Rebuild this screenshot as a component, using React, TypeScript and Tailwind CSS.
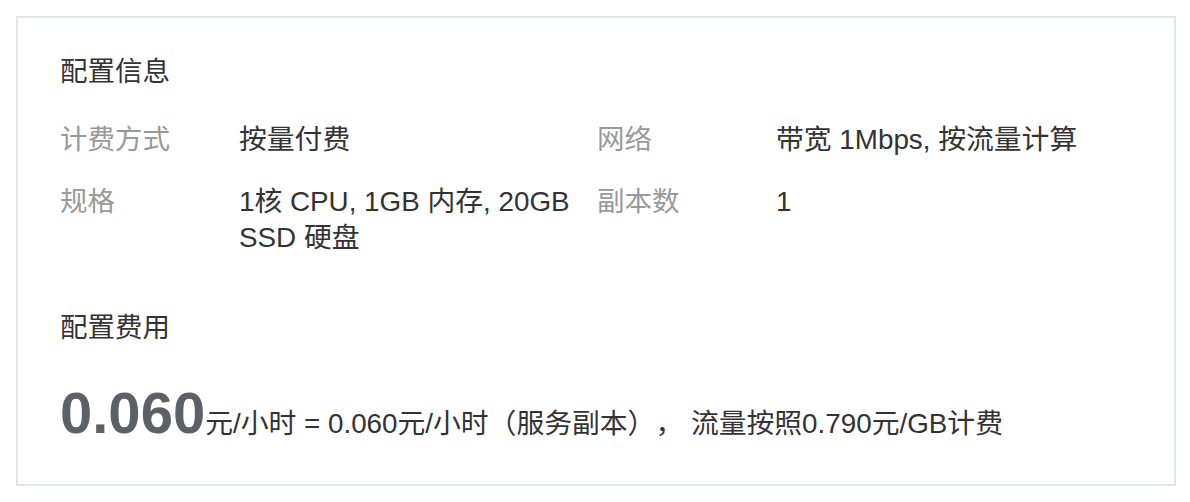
export default function App() {
  const font = { fontFamily: '"Liberation Sans", "Noto Sans CJK SC", sans-serif' };
  return (
    <div className="w-[1190px] h-[502px] bg-white p-4 [text-spacing-trim:space-all]" style={font}>
      <div className="h-[470px] w-[1160px] border-2 border-[#e1e6eb] px-[42px] pt-[36px] text-[#333333]">
        <h2 className="text-[27.5px] leading-[36px]">配置信息</h2>

        <div className="mt-8 grid grid-cols-[179px_358px_179px_358px] gap-y-[26px] text-[27.5px] leading-[36px]">
          <div className="text-[#999999]">计费方式</div>
          <div className="text-[27.8px]">按量付费</div>
          <div className="text-[#999999]">网络</div>
          <div className="text-[27.8px]">带宽 1Mbps, 按流量计算</div>

          <div className="text-[#999999]">规格</div>
          <div className="text-[27.8px]">1核 CPU, 1GB 内存, 20GB SSD 硬盘</div>
          <div className="text-[#999999]">副本数</div>
          <div className="text-[27.8px]">1</div>
        </div>

        <h2 className="mt-[54px] text-[27.5px] leading-[36px]">配置费用</h2>

        <div className="mt-[38px] flex items-baseline whitespace-nowrap">
          <span className="text-[58px] leading-none font-bold text-[#5a6168]">0.060</span>
          <span className="text-[27.8px]">元/小时 = 0.060元/小时（服务副本）， 流量按照0.790元/GB计费</span>
        </div>
      </div>
    </div>
  );
}
